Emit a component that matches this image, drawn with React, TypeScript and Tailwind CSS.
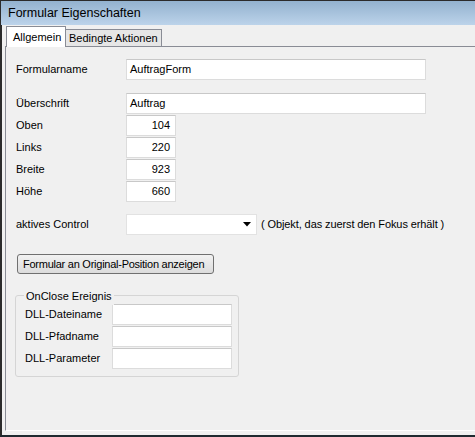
import React from 'react';

const font = { fontFamily: '"Liberation Sans", Arial, sans-serif' };

const inputCls = 'h-[21px] bg-white border border-[#dcdcdc] border-t-[#c8c8c8] px-[3px] text-[11px] leading-[19px] text-black';

const Row: React.FC<{ label: string; value: string; w: string; right?: boolean; className?: string }> = ({ label, value, w, right, className }) => (
  <div className={`flex items-center ${className ?? ''}`}>
    <div className="w-[110px] text-[11px] text-black">{label}</div>
    <div className={`${inputCls} ${w} ${right ? 'text-right pr-[5px]' : ''}`}>{value}</div>
  </div>
);

const GroupRow: React.FC<{ label: string; className?: string }> = ({ label, className }) => (
  <div className={`flex items-center ${className ?? ''}`}>
    <div className="w-[87px] text-[11px] text-black">{label}</div>
    <div className={`${inputCls} w-[120px]`} />
  </div>
);

export default function App() {
  return (
    <div style={font} className="w-[475px] h-[437px] bg-[#f0f0f0] flex flex-col border-t border-l border-[#2b2b2b] border-b-[2px] border-b-[#1f2a30] overflow-hidden">
      {/* title bar */}
      <div className="h-[24px] shrink-0 bg-gradient-to-b from-[#93b2cf] to-[#bcd3ea] flex items-center pl-[7px] text-[12.5px] text-black">
        Formular Eigenschaften
      </div>

      <div className="flex-1 flex flex-col pl-[3px] border-l-[2px] border-[#2b2b2b] -ml-[1px]">
        {/* tabs */}
        <div className="flex items-end h-[21px] shrink-0 pl-[1px]">
          <div className="h-[21px] w-[60px] bg-white border border-b-0 border-[#898c95] pl-[6px] pt-[2px] text-[11px] text-black relative -mb-[1px] z-10">
            Allgemein
          </div>
          <div className="h-[17px] w-[96px] bg-[#e6e6e6] border border-l-0 border-b-0 border-[#898c95] pl-[3px] text-[11px] leading-[16px] text-black">
            Bedingte Aktionen
          </div>
        </div>

        {/* panel */}
        <div className="flex-1 border-t border-l border-[#898c95] bg-[#f0f0f0] pl-[10px] flex flex-col mb-[4px] border-b border-b-white">
          <Row label="Formularname" value="AuftragForm" w="w-[300px]" className="mt-[12px]" />
          <Row label="Überschrift" value="Auftrag" w="w-[300px]" className="mt-[13px]" />
          <Row label="Oben" value="104" w="w-[50px]" right className="mt-[1px]" />
          <Row label="Links" value="220" w="w-[50px]" right className="mt-[1px]" />
          <Row label="Breite" value="923" w="w-[50px]" right className="mt-[1px]" />
          <Row label="Höhe" value="660" w="w-[50px]" right className="mt-[1px]" />

          <div className="flex items-center mt-[12px]">
            <div className="w-[110px] text-[11px] text-black">aktives Control</div>
            <div className="h-[21px] w-[131px] bg-white border border-[#e2e2e2] flex items-center justify-end pr-[5px]">
              <svg width="8" height="5" viewBox="0 0 8 5"><path d="M0 0h8L4 4.5z" fill="#000" /></svg>
            </div>
            <div className="ml-[4px] text-[11px] tracking-[-0.1px] text-black">( Objekt, das zuerst den Fokus erhält )</div>
          </div>

          <button className="mt-[19px] ml-[1px] h-[20px] w-[197px] rounded-[3px] border border-[#707070] bg-gradient-to-b from-[#f2f2f2] to-[#dcdcdc] text-[11px] tracking-[-0.25px] whitespace-nowrap text-black text-left pl-[5px]">
            Formular an Original-Position anzeigen
          </button>

          <div className="relative mt-[21px] -ml-[1px] w-[224px] h-[82px] border border-[#d5d5d5] rounded-[3px] pl-[9px] pt-[8px]">
            <div className="absolute -top-[8px] left-[8px] px-[2px] bg-[#f0f0f0] text-[11px] text-black">OnClose Ereignis</div>
            <GroupRow label="DLL-Dateiname" />
            <GroupRow label="DLL-Pfadname" className="mt-[1px]" />
            <GroupRow label="DLL-Parameter" className="mt-[1px]" />
          </div>
        </div>
      </div>
    </div>
  );
}
